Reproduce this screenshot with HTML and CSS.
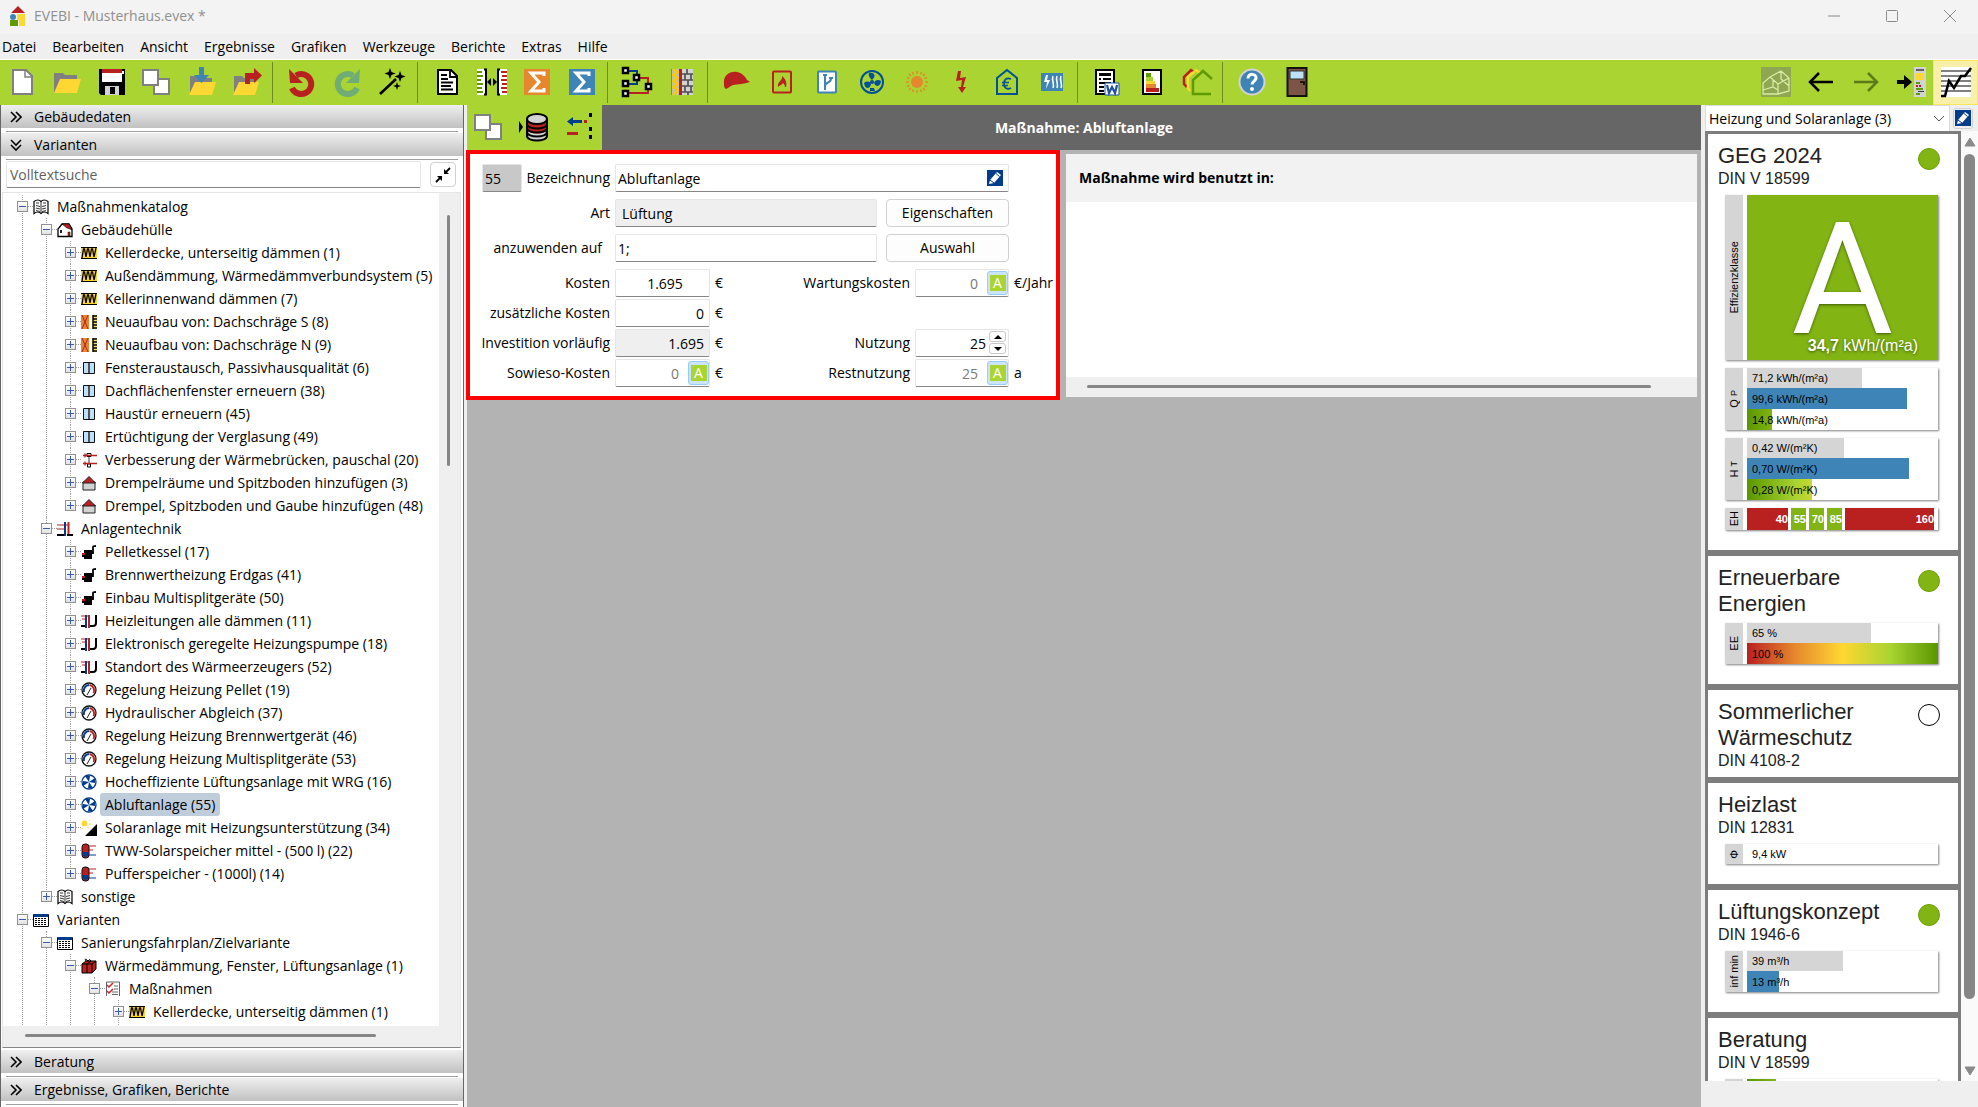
FILE: index.html
```html
<!DOCTYPE html>
<html lang="de">
<head>
    <meta charset="UTF-8">
    <meta name="viewport" content="width=device-width, initial-scale=1.0">
    <title>EVEBI - Musterhaus.evex *</title>
    <link rel="stylesheet" href="styles.css">
</head>
<body>
    <!-- icon sprite -->
    <svg class="sprite" aria-hidden="true">
        <defs>
            <!-- toolbar, 32 x 32 -->
            <symbol id="t-new" viewBox="0 0 32 32"><path d="M7 4h13l6 6v18H7z" fill="#fff" stroke="#808080" stroke-width="2"/><path d="M19 4v7h7" fill="none" stroke="#808080" stroke-width="1.500"/></symbol>
            <symbol id="t-open" viewBox="0 0 32 32"><path d="M3 27V7h9l2 2h12v6H9L4 27z" fill="#808080"/><path d="M9 13h21l-4 14H3z" fill="#ffd732"/></symbol>
            <symbol id="t-save" viewBox="0 0 32 32"><path d="M3 3h26v26H5l-2-2z" fill="#000"/><path d="M6 3h20v13H6z" fill="#fff"/><path d="M6 3h20v4H6z" fill="#b92020"/><path d="M26 5h2v3h-2z" fill="#fff"/><path d="M9 20h14v9H9z" fill="#d3d3d3"/><path d="M14 21h5v7h-5z" fill="#000"/></symbol>
            <symbol id="t-copy" viewBox="0 0 32 32"><g fill="#fff" stroke="#808080" stroke-width="2"><path d="M13 13h15v15H13z"/><path d="M2 4h15v15H2z"/></g></symbol>
            <symbol id="t-import" viewBox="0 0 32 32"><path d="M4 27V10h8l2 2h12v6H9z" fill="#808080"/><path d="M9 16h21l-4 13H3z" fill="#ffd732"/><path d="M13 1h5v8h5l-7.500 8L8 9h5z" fill="#3e84b6"/></symbol>
            <symbol id="t-export" viewBox="0 0 32 32"><path d="M3 27V10h8l2 2h12v6H8z" fill="#808080"/><path d="M8 16h20l-4 13H2z" fill="#ffd732"/><path d="M14 7h9V2l8 7.500-8 7.500v-4h-4v5h-5z" fill="#b92020"/></symbol>
            <symbol id="t-undo" viewBox="0 0 32 32"><path d="M10 9.500A10 10 0 1 1 6 22" fill="none" stroke="#b92020" stroke-width="6"/><path d="M3 3l1 14h13z" fill="#b92020"/></symbol>
            <symbol id="t-redo" viewBox="0 0 32 32"><path d="M22 9.500A10 10 0 1 0 26 22" fill="none" stroke="#70ad74" stroke-width="6"/><path d="M29 3l-1 14H15z" fill="#70ad74"/></symbol>
            <symbol id="t-wand" viewBox="0 0 32 32"><path d="M4 28L20 13" stroke="#000" stroke-width="2.500"/><path d="M14 2l1.500 4 4 1.500-4 1.500-1.500 4-1.500-4-4-1.500 4-1.500zM24 5l1.500 4 4 1.500-4 1.500-1.500 4-1.500-4-4-1.500 4-1.500zM21 16l1 3 3 1-3 1-1 3-1-3-3-1 3-1z"/></symbol>
            <symbol id="t-doc" viewBox="0 0 32 32"><path d="M7 4h13l6 6v18H7z" fill="#fff" stroke="#000" stroke-width="2"/><path d="M19 4v7h7M10 9h6M10 13h7M10 16.500h12M10 20h10M10 23.500h12" fill="none" stroke="#000" stroke-width="1.800"/></symbol>
            <symbol id="t-compare" viewBox="0 0 32 32"><path d="M1 3h9v26H1zM22 3h9v26h-9z" fill="#fff"/><path d="M1 6h5M1 10h6M1 14h4M1 18h6M1 22h5M1 26h6" stroke="#5e9a00" stroke-width="2"/><path d="M25 6h6M26 10h5M25 14h6M26 18h5M25 22h6M26 26h5" stroke="#b92020" stroke-width="2"/><path d="M8 3.500h2v25H8M24 3.500h-2v25h2" fill="none" stroke="#000" stroke-width="2"/><path d="M15 12v8l-4-4zM17 12v8l4-4z"/></symbol>
            <symbol id="t-sigma-o" viewBox="0 0 32 32"><path d="M3 3h26v26H3z" fill="#e6872d"/><path d="M23 10V7H10l8 9-8 9h13v-3" fill="none" stroke="#fff" stroke-width="3"/></symbol>
            <symbol id="t-sigma-b" viewBox="0 0 32 32"><path d="M3 3h26v26H3z" fill="#3e84b6"/><path d="M23 10V7H10l8 9-8 9h13v-3" fill="none" stroke="#fff" stroke-width="3"/></symbol>
            <symbol id="t-nodes" viewBox="0 0 32 32"><path d="M4 5h12v7M4 18h12v-6" fill="none" stroke="#003c8c" stroke-width="2"/><path d="M16 12h11v9M4 27h23v-6" fill="none" stroke="#b92020" stroke-width="2"/><g fill="#fff" stroke="#000" stroke-width="2.500"><path d="M2 2h5v5H2zM2 15h5v5H2zM2 25h5v5H2zM13 9h5v5h-5zM25 18h5v5h-5z"/></g></symbol>
            <symbol id="t-wall" viewBox="0 0 32 32"><path d="M5 3h22v26H5z" fill="#d3d3d3"/><path d="M5 3h8v26H5z" fill="#c9c39d"/><path d="M7 3l5 3-5 3 5 3-5 3 5 3-5 3 5 3-5 5" fill="none" stroke="#ffc800" stroke-width="2"/><path d="M5.500 3v26" stroke="#808080"/><path d="M14.500 3v26" stroke="#b92020" stroke-width="3"/><path d="M16 8h11M16 14h11M16 20h11M16 26h11M21 3v5M25 8v6M19 8v6M22 14v6M25 20v6M19 20v6M22 26v3" stroke="#505050" stroke-width="1.700"/></symbol>
            <symbol id="t-cap" viewBox="0 0 32 32"><path d="M3 18C2 9 9 5 16 6c5 1 8 4 10 8l3 2c-6 2-12 2-17 3-3 1-4 3-7 4-2-1-2-3-2-5z" fill="#b92020"/></symbol>
            <symbol id="t-fire" viewBox="0 0 32 32"><rect x="7" y="5.500" width="18" height="21" rx="1" fill="none" stroke="#b92020" stroke-width="2"/><path d="M12 21c-1-6 5-6 4-11 4 3 5 7 4 11h-1c0-2-1-3-2-4-1 2-3 2-5 4z" fill="#b92020"/></symbol>
            <symbol id="t-pipe" viewBox="0 0 32 32"><rect x="7" y="5.500" width="18" height="21" rx="1" fill="#fff" stroke="#3e84b6" stroke-width="2"/><path d="M14 24V9M14 20c0-4 6-3 6-7" fill="none" stroke="#3e84b6" stroke-width="2"/><path d="M12 9h4M18 12h4" stroke="#3e84b6" stroke-width="2"/></symbol>
            <symbol id="t-fan" viewBox="0 0 32 32"><circle cx="16" cy="16" r="11" fill="none" stroke="#00509b" stroke-width="2"/><g fill="#00509b"><circle cx="16" cy="16" r="2"/><path d="M13 7c5-1 8 3 3 7-2-2-4-4-3-7zM25 15c0 5-5 7-7 2 1-3 4-4 7-2zM8 17c3-2 6-2 7 1-1 5-6 6-7-1zM14 22h4l1 3h-5z"/></g></symbol>
            <symbol id="t-sun" viewBox="0 0 32 32"><circle cx="16" cy="16" r="6" fill="#e6872d"/><path d="M16 5v3M16 24v3M5 16h3M24 16h3M8 8l2 2M22 22l2 2M8 24l2-2M22 10l2-2M11.500 6l1 2.500M20.500 6l-1 2.500M11.500 26l1-2.500M20.500 26l-1-2.500M6 11.500l2.500 1M26 11.500l-2.500 1M6 20.500l2.500-1M26 20.500l-2.500-1" stroke="#e6872d" stroke-width="1.500"/></symbol>
            <symbol id="t-bolt" viewBox="0 0 32 32"><path d="M12 5h3l-1 7 6-1-3 10h3l-4 6-4-6h3l1-7-6 1z" fill="#b92020"/></symbol>
            <symbol id="t-house" viewBox="0 0 32 32"><path d="M6 28V12L16 4l10 8v16z" fill="none" stroke="#00509b" stroke-width="2"/><path d="M20 13c-5-2-7 1-7 5s3 6 7 4M11 16.500h7M11 19.500h6" fill="none" stroke="#00509b" stroke-width="1.700"/></symbol>
            <symbol id="t-heat" viewBox="0 0 32 32"><path d="M5 7h22v18H5z" fill="#3e84b6"/><path d="M10 9l-2 7h3l-1 7 4-9h-3l1-5z" fill="#fff"/><path d="M17 10c-2 4 2 8 0 12M21 10c-2 4 2 8 0 12M25 10c-2 4 2 8 0 12" fill="none" stroke="#fff" stroke-width="1.500"/></symbol>
            <symbol id="t-word" viewBox="0 0 32 32"><path d="M5 4h18v24H5z" fill="#fff" stroke="#000" stroke-width="2"/><path d="M8 7h12v3H8zM8 12h2v2H8zM12 12h8v2h-8zM8 16h12v2H8zM8 20h5v2H8zM8 24h5v2H8z"/><path d="M14 17h14v12H14z" fill="#fff" stroke="#1d50a0"/><path d="M16 19l2 8 3-6 3 6 2-8" fill="none" stroke="#1d50a0" stroke-width="2.200"/></symbol>
            <symbol id="t-label" viewBox="0 0 32 32"><path d="M7 4h18v24H7z" fill="#fff" stroke="#000" stroke-width="2"/><path d="M10 7h5v4h-5z" fill="#5e9a00"/><path d="M10 11h7v4h-7z" fill="#a9d431"/><path d="M10 15h9v3h-9z" fill="#ffd732"/><path d="M10 18h10v4H10z" fill="#e6872d"/><path d="M10 22h13v4H10z" fill="#b92020"/></symbol>
            <symbol id="t-houses" viewBox="0 0 32 32"><path d="M6 21l-3-3v-7l7-7 3 2" fill="none" stroke="#b92020" stroke-width="2.500"/><path d="M9 25l-2-3V11l8-7 4 3" fill="none" stroke="#ffd732" stroke-width="2.500"/><path d="M30 28H12V14l10-9 9 8" fill="none" stroke="#5e9a00" stroke-width="2.500"/></symbol>
            <symbol id="t-help" viewBox="0 0 32 32"><circle cx="16" cy="16" r="12.500" fill="#3e84b6" stroke="#d3d3d3" stroke-width="2"/><path d="M12 12.500c0-6 9-5 8 0-1 3-4 3-4 6" fill="none" stroke="#fff" stroke-width="3"/><circle cx="16" cy="23" r="2" fill="#fff"/></symbol>
            <symbol id="t-door" viewBox="0 0 32 32"><path d="M6.500 2h19v28h-19z" fill="#7d5545" stroke="#111" stroke-width="2"/><path d="M9 5h14v8H9z" fill="#bde0fb" stroke="#333"/><path d="M19 16h4v3" fill="none" stroke="#000" stroke-width="1.500"/></symbol>
            <symbol id="t-model" viewBox="0 0 32 32"><path d="M1 1h30v30H1z" fill="#8fa653"/><path d="M3 28V17l7-6 8 7v10zM10 11l11-6 8 7v13l-11 3M18 18l11-6M21 5v8l8 7M3 24l10-3 5 3M13 21v-7" fill="none" stroke="#d8eba4" stroke-width="1.300"/></symbol>
            <symbol id="t-left" viewBox="0 0 32 32"><path d="M28 16H5M14 7l-9 9 9 9" fill="none" stroke="#000" stroke-width="2.500"/></symbol>
            <symbol id="t-right" viewBox="0 0 32 32"><path d="M4 16h23M18 7l9 9-9 9" fill="none" stroke="#5c7a1c" stroke-width="2.500"/></symbol>
            <symbol id="t-dock" viewBox="0 0 32 32"><path d="M2 14h7v-5l8 7-8 7v-5H2z"/><path d="M19 1h12v30H19z" fill="#d3d3d3"/><path d="M21 3h8v2h-8z" fill="#606060"/><path d="M21 7h8v7h-8z" fill="#ffd732"/><path d="M21 16h4v2h-4z" fill="#5e9a00"/><path d="M21 19h2v2h-2zM24 19h2v2h-2z" fill="#b92020"/><path d="M21 22h7v2h-7zM21 27h4v2h-4z" fill="#5e9a00"/><path d="M23 25h6v1h-6z" fill="#333"/></symbol>
            <symbol id="t-chart" viewBox="0 0 32 32"><path d="M1 1h30v30H1z" fill="#fff"/><path d="M1 5h30M1 10h30M1 15h30M1 20h30M1 25h30" stroke="#808080" stroke-width="2"/><path d="M1 30h4l4-15 5 7 7-12h4l6-8" fill="none" stroke="#000" stroke-width="2.500"/></symbol>
            <symbol id="t-database" viewBox="0 0 32 32"><path d="M1 10v12l4-6z"/><path d="M9 8v16c0 7 20 7 20 0V8z" fill="#d3d3d3"/><path d="M9 11v7c0 6 20 6 20 0v-7z" fill="#b92020"/><g fill="none" stroke="#000" stroke-width="2"><ellipse cx="19" cy="8" rx="10" ry="5" fill="#d3d3d3"/><path d="M9 8v17c0 6 20 6 20 0V8M9 13c0 6 20 6 20 0M9 17c0 6 20 6 20 0M9 21c0 6 20 6 20 0"/></g></symbol>
            <symbol id="t-assign" viewBox="0 0 32 32"><path d="M10 6v3h9v3h-9v3l-6-4.500z" fill="#003c8c"/><path d="M21 9h3v3h-3zM4 21h11v3H4z" fill="#b92020"/><path d="M26 2h3v4h-3zM26 16h3v4h-3zM26 24h3v4h-3z"/></symbol>

            <!-- small icons, 16 x 16 -->
            <symbol id="i-book" viewBox="0 0 16 16"><path d="M1 2.500q4-3 7 0 3-3 7 0v12q-4-3-7 0-3-3-7 0z" fill="#fff" stroke="#000" stroke-width="1.200"/><path d="M8 3v12M3 4h3M3 6.500l4 1M3 9l4 1M3 11.500l4 1M13 4h-3M13 6.500l-4 1M13 9l-4 1M13 11.500l-4 1" stroke="#333"/></symbol>
            <symbol id="i-home" viewBox="0 0 16 16"><path d="M1 14.500V7l4-5h7l3 5v7.500z" fill="#fff" stroke="#000" stroke-width="1.300"/><path d="M5 2h7l3 6-2-1-3-1z" fill="#b92020" stroke="#000" stroke-width=".6"/><path d="M3 8h2v3H3z" fill="#222"/><path d="M11 10h2v4h-2z" fill="#b92020" stroke="#000" stroke-width=".5"/></symbol>
            <symbol id="i-insul" viewBox="0 0 16 16"><path d="M0 2h16v12H0z" fill="#ffd732"/><path d="M0 2.500h16M0 13.500h16" stroke="#000"/><path d="M1 13l1.500-9h1L5 12l1.500-8h1L9 12l1.500-8h1L13 12l2-9" fill="none" stroke="#000" stroke-width="1.300"/></symbol>
            <symbol id="i-roof" viewBox="0 0 16 16"><path d="M0 1h8v14H0z" fill="#e6872d"/><path d="M1 1l6 14M7 1L1 15" stroke="#b92020"/><path d="M11 1h5v14h-5z" fill="#f0df80"/><path d="M12 1v14M12 2h4M12 5h4M12 8h4M12 11h4M12 14h4" stroke="#000" stroke-width="1.400"/></symbol>
            <symbol id="i-window" viewBox="0 0 16 16"><path d="M2.500 2.500h11v11h-11z" fill="#bde0fb" stroke="#111"/><path d="M8 3v10" stroke="#555" stroke-width="2"/></symbol>
            <symbol id="i-bridge" viewBox="0 0 16 16"><path d="M8 4v8" stroke="#333"/><path d="M6 1.500h4v3H6zM6.500 12h3v3h-3z" fill="#fff" stroke="#000"/><path d="M2 3.500h14M2 11.500h14M4 1.500v4M4 9.500v4" stroke="#b92020" stroke-width="1.300"/></symbol>
            <symbol id="i-attic" viewBox="0 0 16 16"><path d="M2 15V7h12v8z" fill="#d3d3d3" stroke="#222"/><path d="M8 1.500L1.500 8h13z" fill="#b92020" stroke="#222"/></symbol>
            <symbol id="i-pipes" viewBox="0 0 16 16"><path d="M0 14h7M10 14h6" stroke="#000" stroke-width="2"/><path d="M0 4h11M0 8h7" stroke="#b92020"/><path d="M8 1v14" stroke="#003c8c" stroke-width="2"/><path d="M11.500 1v12" stroke="#b92020" stroke-width="2"/></symbol>
            <symbol id="i-boiler" viewBox="0 0 16 16"><path d="M3 6h8v9H3z"/><path d="M10 9h2V3q0-1 3-1" fill="none" stroke="#000" stroke-width="1.800"/><path d="M1 12h3" stroke="#000" stroke-width="2"/><path d="M1 9h3v2H1z" fill="#b92020"/></symbol>
            <symbol id="i-tubes" viewBox="0 0 16 16"><path d="M0 13h4M9 13h3q3 0 3-3V2" fill="none" stroke="#000" stroke-width="2"/><path d="M0 3h8M1 6h4" stroke="#b92020"/><path d="M5 2v13" stroke="#003c8c" stroke-width="2"/><path d="M8 2v13" stroke="#b92020" stroke-width="2"/></symbol>
            <symbol id="i-gauge" viewBox="0 0 16 16"><circle cx="8" cy="8" r="7" fill="#fff" stroke="#111" stroke-width="1.300"/><path d="M3 10a5.500 5.500 0 0 1 5-7" fill="none" stroke="#003c8c" stroke-width="2"/><path d="M8.500 3a5.500 5.500 0 0 1 4 8" fill="none" stroke="#b92020" stroke-width="2"/><path d="M6 13l4-7" stroke="#222"/></symbol>
            <symbol id="i-fan" viewBox="0 0 16 16"><circle cx="8" cy="8" r="7" fill="#fff" stroke="#003c8c" stroke-width="1.300"/><g fill="#003c8c"><path d="M4 2h5L8 8zM14 4v5L8 8zM12 14H7l1-6zM2 12V7l6 1z"/></g></symbol>
            <symbol id="i-solar" viewBox="0 0 16 16"><path d="M16 4v12H4z"/><circle cx="3.500" cy="3.500" r="3" fill="#ffd732"/><path d="M8 1l1-1M8 4h2M6 7l2 1M1 8v1" stroke="#ffd732"/></symbol>
            <symbol id="i-tank" viewBox="0 0 16 16"><path d="M6 3h9M6 7h6" stroke="#b92020"/><path d="M6 12h9" stroke="#003c8c"/><rect x="1" y="1" width="7" height="14" rx="3" fill="#b92020" stroke="#111"/><path d="M1.500 9h6v3q-3 4-6 0z" fill="#003c8c"/></symbol>
            <symbol id="i-table" viewBox="0 0 16 16"><path d="M.5 2.500h15v12H.5z" fill="#fff" stroke="#000"/><path d="M1 2h14v3H1z" fill="#003c8c"/><path d="M2 6.500h12M2 8.500h12M2 10.500h12M2 12.500h12" stroke="#000" stroke-dasharray="2 1"/></symbol>
            <symbol id="i-pack" viewBox="0 0 16 16"><path d="M1 6l4-3h10v8l-4 4H1z" fill="#b92020" stroke="#000"/><path d="M1 6h10v9M11 6l4-3M6 6v9M6 6l4-3M5 3q-2-3 1-1l1 1q2-3 3 0" fill="none" stroke="#000"/></symbol>
            <symbol id="i-tasks" viewBox="0 0 16 16"><path d="M1.500 15V1h13v14" fill="#fff" stroke="#666"/><path d="M9 5h4M9 8h4M7 11h6M7 13.500h6" stroke="#666"/><path d="M2 4l2 2 4-4M2 10l2 2 4-4" fill="none" stroke="#c8202c" stroke-width="1.500"/></symbol>
            <symbol id="i-pencil" viewBox="0 0 16 16"><path d="M0 0h16v16H0z" fill="#003c8c"/><path d="M2 14l1-4 7-8 4 3-7 8z" fill="#fff"/><path d="M3 10l4 3M9 3.500l3.500 3" stroke="#003c8c"/></symbol>
            <symbol id="i-right" viewBox="0 0 12 12"><path d="M1 1l5 5-5 5M6 1l5 5-5 5" fill="none" stroke="#000" stroke-width="1.600"/></symbol>
            <symbol id="i-down" viewBox="0 0 12 12"><path d="M1 1l5 5 5-5M1 6l5 5 5-5" fill="none" stroke="#000" stroke-width="1.600"/></symbol>
        </defs>
    </svg>

    <header class="titlebar">
        <svg class="logo" viewBox="0 0 16 20"><path d="M1 7l7-7 7 7z" fill="#b92020"/><circle cx="3" cy="11" r="3" fill="#3e84b6"/><path d="M0 14h8v6H0z" fill="#5e9a00"/><path d="M7 8h8v12H9v-6H7z" fill="#ffd732"/></svg>
        <span class="caption">EVEBI - Musterhaus.evex *</span>
        <div class="window-buttons">
            <button type="button" aria-label="Minimieren"><svg viewBox="0 0 12 12"><path d="M0 6h12" stroke="#8a8a8a"/></svg></button>
            <button type="button" aria-label="Maximieren"><svg viewBox="0 0 12 12"><rect x=".5" y=".5" width="11" height="11" rx="1" fill="none" stroke="#8a8a8a"/></svg></button>
            <button type="button" aria-label="Schließen"><svg viewBox="0 0 12 12"><path d="M0 0l12 12M12 0L0 12" stroke="#8a8a8a"/></svg></button>
        </div>
    </header>

    <nav class="menubar">
        <a href="#">Datei</a>
        <a href="#">Bearbeiten</a>
        <a href="#">Ansicht</a>
        <a href="#">Ergebnisse</a>
        <a href="#">Grafiken</a>
        <a href="#">Werkzeuge</a>
        <a href="#">Berichte</a>
        <a href="#">Extras</a>
        <a href="#">Hilfe</a>
    </nav>

    <div class="toolbar">
        <div class="tools">
            <button type="button" aria-label="Neu"><svg><use href="#t-new"/></svg></button>
            <button type="button" aria-label="Öffnen"><svg><use href="#t-open"/></svg></button>
            <button type="button" aria-label="Speichern"><svg><use href="#t-save"/></svg></button>
            <button type="button" aria-label="Kopieren"><svg><use href="#t-copy"/></svg></button>
            <button type="button" aria-label="Import"><svg><use href="#t-import"/></svg></button>
            <button type="button" aria-label="Export"><svg><use href="#t-export"/></svg></button>
        </div>
        <div class="tools">
            <button type="button" aria-label="Rückgängig"><svg><use href="#t-undo"/></svg></button>
            <button type="button" aria-label="Wiederholen"><svg><use href="#t-redo"/></svg></button>
            <button type="button" aria-label="Assistent"><svg><use href="#t-wand"/></svg></button>
        </div>
        <div class="tools">
            <button type="button" aria-label="Bericht"><svg><use href="#t-doc"/></svg></button>
            <button type="button" aria-label="Vergleich"><svg><use href="#t-compare"/></svg></button>
            <button type="button" aria-label="Summe Energie"><svg><use href="#t-sigma-o"/></svg></button>
            <button type="button" aria-label="Summe Kosten"><svg><use href="#t-sigma-b"/></svg></button>
        </div>
        <div class="tools">
            <button type="button" aria-label="Struktur"><svg><use href="#t-nodes"/></svg></button>
            <button type="button" aria-label="Bauteile"><svg><use href="#t-wall"/></svg></button>
        </div>
        <div class="tools">
            <button type="button" aria-label="Hülle"><svg><use href="#t-cap"/></svg></button>
            <button type="button" aria-label="Heizung"><svg><use href="#t-fire"/></svg></button>
            <button type="button" aria-label="Warmwasser"><svg><use href="#t-pipe"/></svg></button>
            <button type="button" aria-label="Lüftung"><svg><use href="#t-fan"/></svg></button>
            <button type="button" aria-label="Solar"><svg><use href="#t-sun"/></svg></button>
            <button type="button" aria-label="Strom"><svg><use href="#t-bolt"/></svg></button>
            <button type="button" aria-label="Wirtschaftlichkeit"><svg><use href="#t-house"/></svg></button>
            <button type="button" aria-label="Heizlast"><svg><use href="#t-heat"/></svg></button>
        </div>
        <div class="tools">
            <button type="button" aria-label="Word-Bericht"><svg><use href="#t-word"/></svg></button>
            <button type="button" aria-label="Energieausweis"><svg><use href="#t-label"/></svg></button>
            <button type="button" aria-label="Sanierungsfahrplan"><svg><use href="#t-houses"/></svg></button>
        </div>
        <div class="tools last">
            <button type="button" aria-label="Hilfe"><svg><use href="#t-help"/></svg></button>
            <button type="button" aria-label="Beenden"><svg><use href="#t-door"/></svg></button>
        </div>
        <div class="tools last right">
            <button type="button" aria-label="3D-Modell"><svg><use href="#t-model"/></svg></button>
            <button type="button" aria-label="Zurück"><svg><use href="#t-left"/></svg></button>
            <button type="button" aria-label="Vor"><svg><use href="#t-right"/></svg></button>
            <button type="button" aria-label="Andocken"><svg><use href="#t-dock"/></svg></button>
            <button type="button" class="on" aria-label="Diagramm"><svg><use href="#t-chart"/></svg></button>
        </div>
    </div>

    <div class="workspace">
        <aside class="sidebar">
            <button type="button" class="section"><svg><use href="#i-right"/></svg>Gebäudedaten</button>
            <button type="button" class="section"><svg><use href="#i-down"/></svg>Varianten</button>

            <div class="search">
                <input type="text" placeholder="Volltextsuche" aria-label="Volltextsuche">
                <button type="button" aria-label="Einklappen"><svg viewBox="0 0 16 16"><path d="M1 15l5-5M15 1l-5 5" stroke="#000" stroke-width="1.800"/><path d="M2 9h5v5zM14 7H9V2z"/></svg></button>
            </div>

            <div class="tree-box">
                <ul class="tree">
                    <li>
                        <div class="row"><button type="button" class="toggle open" aria-label="Zuklappen"></button><svg><use href="#i-book"/></svg><span>Maßnahmenkatalog</span></div>
                        <ul>
                            <li>
                                <div class="row"><button type="button" class="toggle open" aria-label="Zuklappen"></button><svg><use href="#i-home"/></svg><span>Gebäudehülle</span></div>
                                <ul>
                                    <li><div class="row"><button type="button" class="toggle" aria-label="Aufklappen"></button><svg><use href="#i-insul"/></svg><span>Kellerdecke, unterseitig dämmen (1)</span></div></li>
                                    <li><div class="row"><button type="button" class="toggle" aria-label="Aufklappen"></button><svg><use href="#i-insul"/></svg><span>Außendämmung, Wärmedämmverbundsystem (5)</span></div></li>
                                    <li><div class="row"><button type="button" class="toggle" aria-label="Aufklappen"></button><svg><use href="#i-insul"/></svg><span>Kellerinnenwand dämmen (7)</span></div></li>
                                    <li><div class="row"><button type="button" class="toggle" aria-label="Aufklappen"></button><svg><use href="#i-roof"/></svg><span>Neuaufbau von: Dachschräge S (8)</span></div></li>
                                    <li><div class="row"><button type="button" class="toggle" aria-label="Aufklappen"></button><svg><use href="#i-roof"/></svg><span>Neuaufbau von: Dachschräge N (9)</span></div></li>
                                    <li><div class="row"><button type="button" class="toggle" aria-label="Aufklappen"></button><svg><use href="#i-window"/></svg><span>Fensteraustausch, Passivhausqualität (6)</span></div></li>
                                    <li><div class="row"><button type="button" class="toggle" aria-label="Aufklappen"></button><svg><use href="#i-window"/></svg><span>Dachflächenfenster erneuern (38)</span></div></li>
                                    <li><div class="row"><button type="button" class="toggle" aria-label="Aufklappen"></button><svg><use href="#i-window"/></svg><span>Haustür erneuern (45)</span></div></li>
                                    <li><div class="row"><button type="button" class="toggle" aria-label="Aufklappen"></button><svg><use href="#i-window"/></svg><span>Ertüchtigung der Verglasung (49)</span></div></li>
                                    <li><div class="row"><button type="button" class="toggle" aria-label="Aufklappen"></button><svg><use href="#i-bridge"/></svg><span>Verbesserung der Wärmebrücken, pauschal (20)</span></div></li>
                                    <li><div class="row"><button type="button" class="toggle" aria-label="Aufklappen"></button><svg><use href="#i-attic"/></svg><span>Drempelräume und Spitzboden hinzufügen (3)</span></div></li>
                                    <li><div class="row"><button type="button" class="toggle" aria-label="Aufklappen"></button><svg><use href="#i-attic"/></svg><span>Drempel, Spitzboden und Gaube hinzufügen (48)</span></div></li>
                                </ul>
                            </li>
                            <li>
                                <div class="row"><button type="button" class="toggle open" aria-label="Zuklappen"></button><svg><use href="#i-pipes"/></svg><span>Anlagentechnik</span></div>
                                <ul>
                                    <li><div class="row"><button type="button" class="toggle" aria-label="Aufklappen"></button><svg><use href="#i-boiler"/></svg><span>Pelletkessel (17)</span></div></li>
                                    <li><div class="row"><button type="button" class="toggle" aria-label="Aufklappen"></button><svg><use href="#i-boiler"/></svg><span>Brennwertheizung Erdgas (41)</span></div></li>
                                    <li><div class="row"><button type="button" class="toggle" aria-label="Aufklappen"></button><svg><use href="#i-boiler"/></svg><span>Einbau Multisplitgeräte (50)</span></div></li>
                                    <li><div class="row"><button type="button" class="toggle" aria-label="Aufklappen"></button><svg><use href="#i-tubes"/></svg><span>Heizleitungen alle dämmen (11)</span></div></li>
                                    <li><div class="row"><button type="button" class="toggle" aria-label="Aufklappen"></button><svg><use href="#i-tubes"/></svg><span>Elektronisch geregelte Heizungspumpe (18)</span></div></li>
                                    <li><div class="row"><button type="button" class="toggle" aria-label="Aufklappen"></button><svg><use href="#i-tubes"/></svg><span>Standort des Wärmeerzeugers (52)</span></div></li>
                                    <li><div class="row"><button type="button" class="toggle" aria-label="Aufklappen"></button><svg><use href="#i-gauge"/></svg><span>Regelung Heizung Pellet (19)</span></div></li>
                                    <li><div class="row"><button type="button" class="toggle" aria-label="Aufklappen"></button><svg><use href="#i-gauge"/></svg><span>Hydraulischer Abgleich (37)</span></div></li>
                                    <li><div class="row"><button type="button" class="toggle" aria-label="Aufklappen"></button><svg><use href="#i-gauge"/></svg><span>Regelung Heizung Brennwertgerät (46)</span></div></li>
                                    <li><div class="row"><button type="button" class="toggle" aria-label="Aufklappen"></button><svg><use href="#i-gauge"/></svg><span>Regelung Heizung Multisplitgeräte (53)</span></div></li>
                                    <li><div class="row"><button type="button" class="toggle" aria-label="Aufklappen"></button><svg><use href="#i-fan"/></svg><span>Hocheffiziente Lüftungsanlage mit WRG (16)</span></div></li>
                                    <li><div class="row selected"><button type="button" class="toggle" aria-label="Aufklappen"></button><svg><use href="#i-fan"/></svg><span>Abluftanlage (55)</span></div></li>
                                    <li><div class="row"><button type="button" class="toggle" aria-label="Aufklappen"></button><svg><use href="#i-solar"/></svg><span>Solaranlage mit Heizungsunterstützung (34)</span></div></li>
                                    <li><div class="row"><button type="button" class="toggle" aria-label="Aufklappen"></button><svg><use href="#i-tank"/></svg><span>TWW-Solarspeicher mittel - (500 l) (22)</span></div></li>
                                    <li><div class="row"><button type="button" class="toggle" aria-label="Aufklappen"></button><svg><use href="#i-tank"/></svg><span>Pufferspeicher - (1000l) (14)</span></div></li>
                                </ul>
                            </li>
                            <li><div class="row"><button type="button" class="toggle" aria-label="Aufklappen"></button><svg><use href="#i-book"/></svg><span>sonstige</span></div></li>
                        </ul>
                    </li>
                    <li class="more">
                        <div class="row"><button type="button" class="toggle open" aria-label="Zuklappen"></button><svg><use href="#i-table"/></svg><span>Varianten</span></div>
                        <ul>
                            <li class="more">
                                <div class="row"><button type="button" class="toggle open" aria-label="Zuklappen"></button><svg><use href="#i-table"/></svg><span>Sanierungsfahrplan/Zielvariante</span></div>
                                <ul>
                                    <li class="more">
                                        <div class="row"><button type="button" class="toggle open" aria-label="Zuklappen"></button><svg><use href="#i-pack"/></svg><span>Wärmedämmung, Fenster, Lüftungsanlage (1)</span></div>
                                        <ul>
                                            <li class="more">
                                                <div class="row"><button type="button" class="toggle open" aria-label="Zuklappen"></button><svg><use href="#i-tasks"/></svg><span>Maßnahmen</span></div>
                                                <ul>
                                                    <li class="more"><div class="row"><button type="button" class="toggle" aria-label="Aufklappen"></button><svg><use href="#i-insul"/></svg><span>Kellerdecke, unterseitig dämmen (1)</span></div></li>
                                                </ul>
                                            </li>
                                        </ul>
                                    </li>
                                </ul>
                            </li>
                        </ul>
                    </li>
                </ul>
                <div class="scroll-y"><div class="thumb"></div></div>
                <div class="scroll-x"><div class="thumb"></div></div>
            </div>

            <button type="button" class="section"><svg><use href="#i-right"/></svg>Beratung</button>
            <button type="button" class="section"><svg><use href="#i-right"/></svg>Ergebnisse, Grafiken, Berichte</button>
        </aside>

        <main class="main">
            <div class="main-head">
                <div class="tools last">
                    <button type="button" aria-label="Kopieren"><svg><use href="#t-copy"/></svg></button>
                    <button type="button" aria-label="In Datenbank"><svg><use href="#t-database"/></svg></button>
                    <button type="button" aria-label="Zuordnen"><svg><use href="#t-assign"/></svg></button>
                </div>
                <h1>Maßnahme: Abluftanlage</h1>
            </div>

            <div class="panels">
                <form class="measure">
                    <div class="name-label">
                        <input type="text" class="number" value="55" aria-label="Nummer">
                        <label for="name">Bezeichnung</label>
                    </div>
                    <div class="wide name-field">
                        <input type="text" id="name" value="Abluftanlage">
                        <button type="button" class="edit" aria-label="Bearbeiten"><svg><use href="#i-pencil"/></svg></button>
                    </div>

                    <label for="kind" class="tall">Art</label>
                    <div class="wide">
                        <input type="text" id="kind" class="indent" value="Lüftung" readonly>
                        <button type="button" class="push">Eigenschaften</button>
                    </div>

                    <label for="apply" class="tall apply">anzuwenden auf</label>
                    <div class="wide">
                        <input type="text" id="apply" value="1;">
                        <button type="button" class="push">Auswahl</button>
                    </div>

                    <label for="cost">Kosten</label>
                    <input type="text" id="cost" class="center" value="1.695">
                    <span class="unit">€</span>
                    <label for="service">Wartungskosten</label>
                    <div class="auto">
                        <input type="text" id="service" value="0">
                        <button type="button"><span>A</span></button>
                    </div>
                    <span class="unit">€/Jahr</span>

                    <label for="extra">zusätzliche Kosten</label>
                    <input type="text" id="extra" class="num" value="0">
                    <span class="unit to-end">€</span>

                    <label for="invest">Investition vorläufig</label>
                    <input type="text" id="invest" class="num" value="1.695" readonly>
                    <span class="unit">€</span>
                    <label for="use">Nutzung</label>
                    <div class="spin">
                        <input type="text" id="use" value="25">
                        <div class="spin-buttons">
                            <button type="button" aria-label="Mehr"><svg viewBox="0 0 8 4"><path d="M0 4l4-4 4 4z"/></svg></button>
                            <button type="button" aria-label="Weniger"><svg viewBox="0 0 8 4"><path d="M0 0l4 4 4-4z"/></svg></button>
                        </div>
                    </div>
                    <span class="unit"></span>

                    <label for="anyway">Sowieso-Kosten</label>
                    <div class="auto">
                        <input type="text" id="anyway" value="0">
                        <button type="button"><span>A</span></button>
                    </div>
                    <span class="unit">€</span>
                    <label for="left">Restnutzung</label>
                    <div class="auto">
                        <input type="text" id="left" value="25">
                        <button type="button"><span>A</span></button>
                    </div>
                    <span class="unit">a</span>
                </form>

                <section class="used-in">
                    <h2>Maßnahme wird benutzt in:</h2>
                    <div class="list"></div>
                    <div class="scroll-x"><div class="thumb"></div></div>
                </section>
            </div>
        </main>

        <aside class="results">
            <div class="variant">
                <div class="select">
                    <select aria-label="Variante"><option>Heizung und Solaranlage (3)</option></select>
                    <svg viewBox="0 0 10 6"><path d="M0 0l5 5 5-5" fill="none" stroke="#555"/></svg>
                </div>
                <button type="button" aria-label="Bearbeiten"><svg><use href="#i-pencil"/></svg></button>
            </div>

            <div class="result-box">
                <div class="cards">
                    <section class="card">
                        <div class="light green"></div>
                        <h3>GEG 2024</h3>
                        <p>DIN V 18599</p>
                        <div class="gauge big">
                            <div class="tag"><span>Effizienzklasse</span></div>
                            <div class="class-a">
                                <div class="letter">A</div>
                                <div class="value"><b>34,7</b> kWh/(m²a)</div>
                            </div>
                        </div>
                        <div class="gauge">
                            <div class="tag"><span>Q <small>P</small></span></div>
                            <div class="bars">
                                <div class="bar"><i class="grey" style="width: 60%"></i><span>71,2 kWh/(m²a)</span></div>
                                <div class="bar"><i class="blue" style="width: 84%"></i><span>99,6 kWh/(m²a)</span></div>
                                <div class="bar"><i class="leaf" style="width: 13%"></i><span>14,8 kWh/(m²a)</span></div>
                            </div>
                        </div>
                        <div class="gauge">
                            <div class="tag"><span>H <small>T</small></span></div>
                            <div class="bars">
                                <div class="bar"><i class="grey" style="width: 51%"></i><span>0,42 W/(m²K)</span></div>
                                <div class="bar"><i class="blue" style="width: 85%"></i><span>0,70 W/(m²K)</span></div>
                                <div class="bar"><i class="lime" style="width: 34%"></i><span>0,28 W/(m²K)</span></div>
                            </div>
                        </div>
                        <div class="gauge">
                            <div class="tag"><span>EH</span></div>
                            <div class="steps">
                                <b class="bad first">40</b>
                                <b>55</b>
                                <b>70</b>
                                <b>85</b>
                                <b class="bad rest">160</b>
                            </div>
                        </div>
                    </section>

                    <section class="card">
                        <div class="light green"></div>
                        <h3>Erneuerbare Energien</h3>
                        <div class="gauge">
                            <div class="tag"><span>EE</span></div>
                            <div class="bars">
                                <div class="bar"><i class="grey" style="width: 65%"></i><span>65 %</span></div>
                                <div class="bar"><i class="rainbow" style="width: 100%"></i><span>100 %</span></div>
                            </div>
                        </div>
                    </section>

                    <section class="card">
                        <div class="light"></div>
                        <h3>Sommerlicher Wärmeschutz</h3>
                        <p>DIN 4108-2</p>
                    </section>

                    <section class="card">
                        <h3>Heizlast</h3>
                        <p>DIN 12831</p>
                        <div class="gauge">
                            <div class="tag"><span>Φ</span></div>
                            <div class="bars">
                                <div class="bar"><span>9,4 kW</span></div>
                            </div>
                        </div>
                    </section>

                    <section class="card">
                        <div class="light green"></div>
                        <h3>Lüftungskonzept</h3>
                        <p>DIN 1946-6</p>
                        <div class="gauge">
                            <div class="tag"><span>inf min</span></div>
                            <div class="bars">
                                <div class="bar"><i class="grey" style="width: 50%"></i><span>39 m³/h</span></div>
                                <div class="bar"><i class="blue" style="width: 17%"></i><span>13 m³/h</span></div>
                            </div>
                        </div>
                    </section>

                    <section class="card">
                        <h3>Beratung</h3>
                        <p>DIN V 18599</p>
                        <div class="gauge">
                            <div class="tag"></div>
                            <div class="bars">
                                <div class="bar"><i class="leaf" style="width: 15%"></i></div>
                            </div>
                        </div>
                    </section>
                </div>
                <div class="result-scroll">
                    <svg viewBox="0 0 12 10"><path d="M6 1l5 8H1z" fill="#8a8a8a" stroke="#8a8a8a" stroke-linejoin="round"/></svg>
                    <div class="thumb"></div>
                    <svg viewBox="0 0 12 10"><path d="M6 9l5-8H1z" fill="#8a8a8a" stroke="#8a8a8a" stroke-linejoin="round"/></svg>
                </div>
            </div>
        </aside>
    </div>
</body>
</html>
```

FILE: styles.css
```css
* {
    margin: 0;
    padding: 0;
    box-sizing: border-box;
}

body {
    display: flex;
    flex-direction: column;
    height: 100vh;
    overflow: hidden;
    background-color: #efefef;
    color: #000;
    font-family: "Open Sans", "Noto Sans", sans-serif;
    font-size: 14px;
    line-height: 20px;
}

button,
input,
select {
    font: inherit;
    color: inherit;
    border: none;
    background: none;
    outline: none;
}

svg {
    display: block;
    flex: none;
}

ul {
    list-style: none;
}

.sprite {
    position: absolute;
    width: 0;
    height: 0;
}

/* title bar and menu */

.titlebar {
    display: flex;
    align-items: center;
    flex: none;
    height: 34px;
    padding: 0 0 3px 10px;
    background-color: #f3f3f3;
    color: #8f8f8f;
}

.logo {
    width: 16px;
    height: 20px;
    margin-right: 8px;
}

.window-buttons {
    display: flex;
    margin-left: auto;
}

.window-buttons button {
    display: flex;
    justify-content: center;
    width: 58px;
    padding-left: 2px;
}

.window-buttons svg {
    width: 12px;
    height: 12px;
}

.menubar {
    display: flex;
    align-items: center;
    flex: none;
    gap: 16px;
    height: 26px;
    padding-left: 2px;
    border-bottom: 1px solid #fff;
}

.menubar a {
    color: #000;
    text-decoration: none;
}

/* toolbars */

.toolbar {
    display: flex;
    flex: none;
    height: 45px;
    background-color: #a9d431;
}

.tools {
    display: flex;
    background-color: #a9d431;
}

.tools::after {
    content: "";
    width: 1px;
    margin: 2px 7px 2px 2px;
    background-color: #6f8c20;
}

.tools.last::after {
    display: none;
}

.tools.right {
    margin-left: auto;
}

.tools button {
    display: flex;
    align-items: center;
    justify-content: center;
    width: 45px;
    height: 45px;
    padding: 0 2px 2px 0;
}

.tools.right button {
    padding-right: 0;
}

.tools svg {
    width: 32px;
    height: 32px;
}

.tools .on {
    background-color: #f8f0a8;
    border: 1px solid #f5e85c;
}

/* three columns */

.workspace {
    display: flex;
    flex: 1;
    min-height: 0;
}

.sidebar {
    display: flex;
    flex-direction: column;
    flex: none;
    width: 464px;
    margin-right: 3px;
    background-color: #fff;
    border-left: 1px solid #666;
    border-right: 1px solid #666;
}

.section {
    display: flex;
    align-items: center;
    flex: none;
    gap: 12px;
    height: 23px;
    margin-bottom: 5px;
    padding-left: 9px;
    background: linear-gradient(#efefef, #c1c1c1);
    position: relative;
}

.section:last-child {
    margin-bottom: 6px;
}

.section svg {
    width: 12px;
    height: 12px;
}

.section::after {
    content: "";
    position: absolute;
    left: 5px;
    right: 5px;
    bottom: -4px;
    height: 1px;
    background-color: #a0a0a0;
}

.search {
    display: flex;
    align-items: center;
    gap: 9px;
    padding: 0 7px 4px 5px;
}

.search input {
    flex: 1;
    height: 27px;
    padding-left: 3px;
    border: 1px solid #e5e5e5;
    border-bottom-color: #868686;
    border-radius: 2px;
}

.search input::placeholder {
    color: #5f5f5f;
}

.search button {
    display: flex;
    align-items: center;
    justify-content: center;
    width: 26px;
    height: 25px;
    border: 1px solid #d0d0d0;
    border-radius: 4px;
}

.search svg {
    width: 16px;
    height: 16px;
}

.tree-box {
    display: grid;
    grid-template-columns: 1fr 21px;
    grid-template-rows: 1fr 21px;
    flex: 1;
    min-height: 0;
    margin: 0 2px 2px 1px;
    background-color: #efefef;
    border: 1px solid #e5e5e5;
    border-bottom-color: #868686;
}

.tree {
    overflow: hidden;
    padding: 2px 0 0 14px;
    background-color: #fff;
}

.tree ul {
    padding-left: 24px;
}

.tree li {
    position: relative;
}

.tree li::before {
    content: "";
    position: absolute;
    left: 5px;
    top: 0;
    bottom: 0;
    border-left: 1px dotted #a0a0a0;
}

.tree li:last-child::before {
    bottom: auto;
    height: 11px;
}

.tree li.more::before {
    bottom: -8px;
    height: auto;
}

.row {
    display: flex;
    align-items: center;
    height: 23px;
    position: relative;
    white-space: nowrap;
}

.row::before {
    content: "";
    position: absolute;
    left: 11px;
    width: 5px;
    border-top: 1px dotted #a0a0a0;
}

.toggle {
    width: 11px;
    height: 11px;
    border: 1px solid #919191;
    background: linear-gradient(#3c58b0, #3c58b0) center / 7px 1px no-repeat, linear-gradient(#3c58b0, #3c58b0) center / 1px 7px no-repeat, linear-gradient(#fff, #e2e2e2);
}

.toggle.open {
    background: linear-gradient(#3c58b0, #3c58b0) center / 7px 1px no-repeat, linear-gradient(#fff, #e2e2e2);
}

.row svg {
    width: 16px;
    height: 16px;
    margin: 0 3px 0 5px;
}

.row span {
    padding: 0 5px;
    line-height: 23px;
}

.row.selected span {
    background-color: #bfcddb;
    border-radius: 3px;
}

.thumb {
    background-color: #868686;
    border-radius: 2px;
}

.scroll-y {
    padding: 22px 0 0 8px;
}

.scroll-y .thumb {
    width: 3px;
    height: 31%;
}

.scroll-x {
    padding-top: 8px;
}

.scroll-x .thumb {
    height: 3px;
}

.tree-box .scroll-x {
    padding-left: 22px;
    padding-right: 63px;
}

/* measure editor */

.main {
    flex: 1;
    min-width: 0;
    background-color: #b3b3b3;
}

.main-head {
    display: grid;
    grid-template-columns: 135px 1fr 135px;
    align-items: center;
    height: 45px;
    background-color: #666;
    color: #fff;
}

h1,
h2 {
    font-size: 14px;
    font-weight: bold;
}

h1 {
    text-align: center;
}

.panels {
    display: flex;
    align-items: flex-start;
    gap: 6px;
    padding-right: 4px;
}

.measure {
    display: grid;
    grid-template-columns: 140px 95px 20px 170px 94px 42px;
    align-items: center;
    gap: 2px 5px;
    margin-left: -1px;
    padding: 10px 0 9px;
    background-color: #fff;
    border: 4px solid #f00;
}

.measure label {
    text-align: right;
    white-space: nowrap;
}

.measure .tall {
    margin-bottom: 5px;
}

.measure .apply {
    padding-right: 8px;
}

.measure input {
    width: 100%;
    min-width: 0;
    height: 28px;
    padding: 0 5px 0 2px;
    background-color: #fff;
    border: 1px solid #e5e5e5;
    border-bottom-color: #868686;
    border-radius: 2px;
}

.measure input[readonly] {
    background-color: #efefef;
}

.measure .indent {
    padding-left: 6px;
}

.measure .center {
    padding-left: 10px;
    text-align: center;
}

.measure .num {
    text-align: right;
}

.name-label {
    display: flex;
    align-items: center;
    justify-content: space-between;
    margin: 0 0 5px 12px;
}

.measure .number {
    width: 40px;
    background-color: #c8c8c8;
}

/* spans to the last column, whose width stays free for the units */
.wide {
    display: flex;
    align-items: center;
    grid-column: 2 / 7;
    gap: 9px;
    margin: 0 47px 5px 0;
}

.name-field {
    position: relative;
}

.edit {
    position: absolute;
    right: 6px;
}

.edit svg {
    width: 16px;
    height: 16px;
}

.push {
    flex: none;
    width: 123px;
    height: 28px;
    background-color: #fdfdfd;
    border: 1px solid #d0d0d0;
    border-radius: 4px;
}

.to-end {
    grid-column: 3 / 7;
}

.auto,
.spin {
    position: relative;
}

.auto input {
    padding-right: 30px;
    color: #7a7a7a;
    text-align: right;
}

.auto button {
    position: absolute;
    right: 1px;
    top: 2px;
    display: flex;
    align-items: center;
    justify-content: center;
    width: 21px;
    height: 24px;
    background-color: #cce4f7;
    border: 1px solid #99cdf5;
    border-radius: 3px;
}

.auto span {
    width: 16px;
    background-color: #a9d431;
    color: #fff;
    line-height: 16px;
}

.spin input {
    padding-right: 22px;
    text-align: right;
}

.spin-buttons {
    position: absolute;
    right: 3px;
    top: 2px;
    display: grid;
    gap: 1px;
}

.spin-buttons button {
    display: flex;
    align-items: center;
    justify-content: center;
    width: 17px;
    height: 11px;
    border: 1px solid #c8c8c8;
    border-radius: 3px;
}

.spin-buttons svg {
    width: 8px;
    height: 4px;
}

.used-in {
    flex: 1;
    margin-top: 4px;
    background-color: #efefef;
}

.used-in h2 {
    padding: 14px 13px;
    background-color: #f2f2f2;
}

.used-in .list {
    height: 175px;
    background-color: #fff;
}

.used-in .scroll-x {
    height: 20px;
    padding-left: 21px;
    padding-right: 46px;
}

/* result cards */

.results {
    display: flex;
    flex-direction: column;
    flex: none;
    width: 273px;
    margin-left: 4px;
    padding-bottom: 26px;
}

.variant {
    display: flex;
    align-items: center;
    gap: 3px;
    height: 26px;
    padding-right: 5px;
}

.select {
    display: flex;
    align-items: center;
    flex: 1;
    height: 26px;
    padding-right: 5px;
    background-color: #fff;
    border: 1px solid #dcdcdc;
    border-bottom: none;
}

.select select {
    flex: 1;
    padding-left: 3px;
    appearance: none;
}

.select svg {
    width: 10px;
    height: 6px;
}

.variant button {
    display: flex;
    align-items: center;
    justify-content: center;
    width: 20px;
    height: 21px;
    border: 1px solid #d0d0d0;
    border-radius: 3px;
}

.variant button svg {
    width: 16px;
    height: 16px;
}

.result-box {
    display: flex;
    flex: 1;
    min-height: 0;
}

.cards {
    display: flex;
    flex-direction: column;
    flex: 1;
    gap: 6px;
    overflow: hidden;
    padding: 3px 3px 0;
    background-color: #7d7d7d;
    font-family: "Liberation Sans", Arial, sans-serif;
}

.card {
    flex: none;
    position: relative;
    padding: 9px 20px 6px 10px;
    background-color: #fff;
    color: #222;
}

.card h3 {
    max-width: 170px;
    font-size: 22px;
    font-weight: normal;
    line-height: 26px;
}

.card p {
    font-size: 16px;
    line-height: 20px;
}

.light {
    position: absolute;
    top: 14px;
    right: 18px;
    width: 22px;
    height: 22px;
    border: 1px solid #000;
    border-radius: 50%;
}

.light.green {
    background-color: #82b414;
    border-color: #6ba000;
}

.gauge {
    display: grid;
    grid-template-columns: 18px 1fr;
    gap: 4px;
    margin: 6px 0 14px 7px;
    background-color: #fff;
    box-shadow: 1px 1px 2px #808080;
    color: #000;
    font-size: 11px;
}

.gauge + .gauge {
    margin-top: -6px;
}

.tag {
    display: flex;
    align-items: center;
    justify-content: center;
    background-color: #d5d5d5;
}

.tag span {
    writing-mode: vertical-rl;
    transform: rotate(180deg);
    line-height: 18px;
}

.tag small {
    font-size: 9px;
}

.big {
    height: 165px;
}

.class-a {
    display: flex;
    flex-direction: column;
    justify-content: flex-end;
    background-color: #82b414;
    color: #fff;
    text-shadow: 0 1px 3px #3c5a00;
}

.letter {
    font-family: Roboto, sans-serif;
    font-size: 156px;
    font-weight: 400;
    line-height: 112px;
    text-align: center;
}

.value {
    padding: 0 20px 4px 0;
    font-size: 16px;
    line-height: 20px;
    text-align: right;
}

.bar {
    display: flex;
    align-items: center;
    position: relative;
    height: 21px;
}

.bar:first-child {
    height: 20px;
}

.bar i {
    position: absolute;
    top: 0;
    bottom: 0;
    left: 0;
}

.bar span {
    position: relative;
    padding-left: 5px;
}

.grey {
    background-color: #d5d5d5;
}

.blue {
    background-color: #3e84b6;
}

.leaf {
    background: linear-gradient(90deg, #5a9600, #82b414);
}

.lime {
    background: linear-gradient(90deg, #5a9600, #a9d431 75%, #c8d732);
}

.rainbow {
    background: linear-gradient(90deg, #b92020, #e6872d 25%, #ffd732 50%, #a9d431 75%, #5a9600);
}

.steps {
    display: flex;
    gap: 3px;
    height: 22px;
    padding-right: 4px;
    color: #fff;
    line-height: 22px;
    text-align: right;
}

.steps b {
    width: 15px;
    background-color: #82b414;
}

.steps .bad {
    background-color: #b92020;
}

.steps .first {
    width: 41px;
}

.steps .rest {
    flex: 1;
}

.result-scroll {
    display: flex;
    flex-direction: column;
    align-items: center;
    gap: 7px;
    width: 17px;
    padding: 6px 0 5px;
    background-color: #fafafa;
}

.result-scroll svg {
    width: 12px;
    height: 10px;
}

.result-scroll .thumb {
    width: 11px;
    height: 90%;
    margin-bottom: auto;
    border-radius: 6px;
}
```
